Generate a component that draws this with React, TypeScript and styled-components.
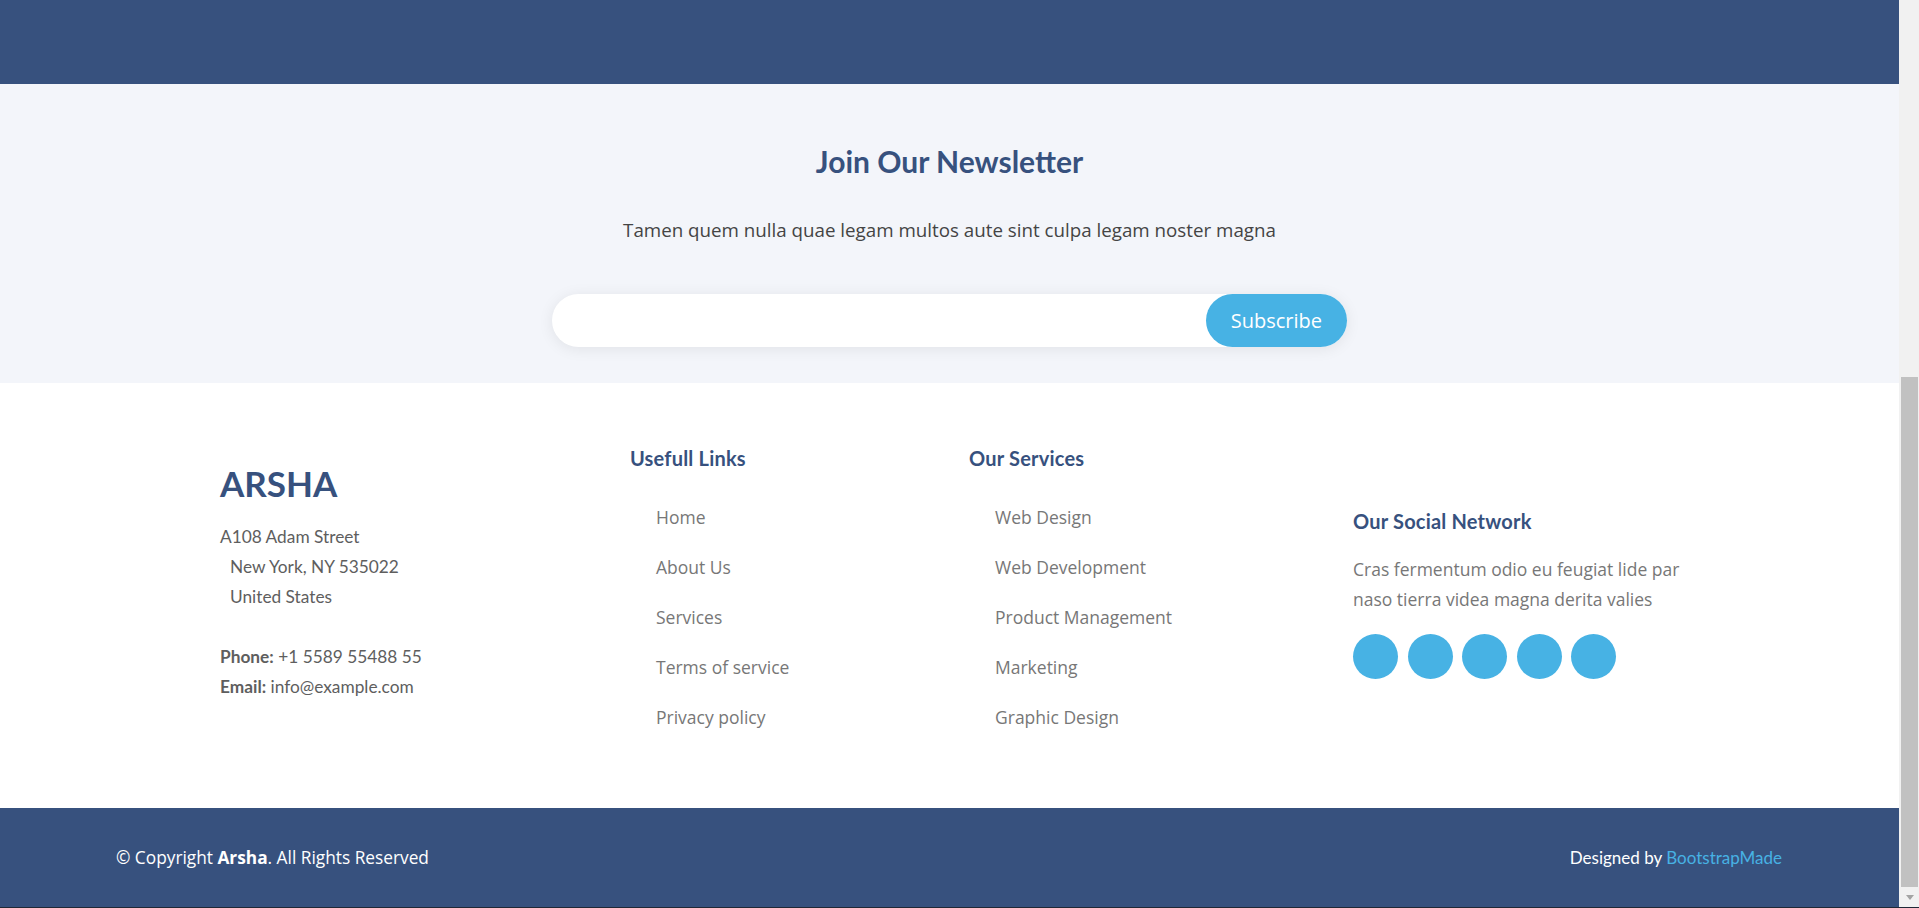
import styled, { createGlobalStyle } from "styled-components";

const usefulLinks = ['Home', 'About Us', 'Services', 'Terms of service', 'Privacy policy'];
const services = ['Web Design', 'Web Development', 'Product Management', 'Marketing', 'Graphic Design'];
const socials = ['twitter', 'facebook', 'instagram', 'skype', 'linkedin'];

const App = () => {
  return (
    <Screen>
      <GlobalStyle />
      <Viewport>
        <Page>
          <TopBand />
          <Newsletter>
            <NewsTitle>Join Our Newsletter</NewsTitle>
            <NewsText>Tamen quem nulla quae legam multos aute sint culpa legam noster magna</NewsText>
            <SubscribeForm onSubmit={(e) => e.preventDefault()}>
              <EmailInput type="email" name="email" />
              <SubscribeButton type="submit">Subscribe</SubscribeButton>
            </SubscribeForm>
          </Newsletter>

          <FooterTop>
            <Column $offset={18}>
              <Logo>Arsha</Logo>
              <Address>
                A108 Adam Street<br />
                <Indent>New York, NY 535022</Indent><br />
                <Indent>United States</Indent><br /><br />
                <strong>Phone:</strong> +1 5589 55488 55<br />
                <strong>Email:</strong> info@example.com
              </Address>
            </Column>

            <Column $offset={0}>
              <ColTitle>Usefull Links</ColTitle>
              <LinkList>
                {usefulLinks.map((l) => <LinkItem key={l}>{l}</LinkItem>)}
              </LinkList>
            </Column>

            <Column $offset={0}>
              <ColTitle>Our Services</ColTitle>
              <LinkList>
                {services.map((s) => <LinkItem key={s}>{s}</LinkItem>)}
              </LinkList>
            </Column>

            <Column $offset={63}>
              <ColTitle>Our Social Network</ColTitle>
              <SocialText>Cras fermentum odio eu feugiat lide par naso tierra videa magna derita valies</SocialText>
              <SocialRow>
                {socials.map((s) => <SocialCircle key={s} aria-label={s} />)}
              </SocialRow>
            </Column>
          </FooterTop>

          <FooterBottom>
            <Copyright>© Copyright <strong>Arsha</strong>. All Rights Reserved</Copyright>
            <Credits>Designed by <a href="#">BootstrapMade</a></Credits>
          </FooterBottom>
        </Page>

        <Scrollbar>
          <Thumb />
          <ArrowBox><Arrow /></ArrowBox>
        </Scrollbar>
      </Viewport>
      <BottomEdge />
    </Screen>
  );
}

export default App;

const GlobalStyle = createGlobalStyle`
  html, body {
    margin: 0;
    padding: 0;
    overflow: hidden;
  }
  body {
    font-family: "Open Sans", sans-serif;
  }
  * {
    box-sizing: border-box;
  }
`

const Screen = styled.div`
  width: 1919px;
  height: 908px;
  display: flex;
  flex-direction: column;
`
const Viewport = styled.div`
  flex: 1;
  min-height: 0;
  display: flex;
`
const Page = styled.div`
  flex: 1;
  display: flex;
  flex-direction: column;
  overflow: hidden;
`
const TopBand = styled.div`
  height: 84px;
  background: #37517e;
`

const Newsletter = styled.section`
  height: 299px;
  padding-top: 62px;
  background: #f3f5fa;
  display: flex;
  flex-direction: column;
  align-items: center;
`
const NewsTitle = styled.h4`
  margin: 0 0 40px;
  font-family: "Lato", sans-serif;
  font-size: 30px;
  font-weight: 700;
  line-height: 1;
  color: #37517e;
`
const NewsText = styled.p`
  margin: 0 0 50px;
  font-size: 18.75px;
  line-height: 28px;
  color: #444444;
`
const SubscribeForm = styled.form`
  width: 795px;
  height: 53px;
  display: flex;
  background: #fff;
  border-radius: 50px;
  box-shadow: 0px 2px 15px rgba(0, 0, 0, 0.08);
`
const EmailInput = styled.input`
  flex: 1;
  border: 0;
  background: transparent;
  padding: 0 24px;
  font: inherit;
  outline: none;
`
const SubscribeButton = styled.button`
  border: 0;
  border-radius: 50px;
  padding: 0 25px;
  background: #47b2e4;
  color: #fff;
  font-family: "Open Sans", sans-serif;
  font-size: 20px;
`

const FooterTop = styled.div`
  height: 425px;
  padding: 65px 0 0 220px;
  background: #fff;
  display: grid;
  grid-template-columns: 410px 339px 384px 350px;
  align-items: start;
`
const Column = styled.div<{ $offset: number }>`
  margin-top: ${(props) => props.$offset + 'px'};
`
const Logo = styled.h3`
  margin: 0 0 21px;
  font-family: "Lato", sans-serif;
  font-size: 35px;
  font-weight: 700;
  line-height: 1;
  text-transform: uppercase;
  color: #37517e;
`
const Address = styled.p`
  margin: 0;
  font-family: "Lato", sans-serif;
  font-size: 17.3px;
  line-height: 30px;
  color: #5e5e5e;
  strong {
    font-weight: 700;
  }
`
const Indent = styled.span`
  padding-left: 10px;
`
const ColTitle = styled.h4`
  margin: 0 0 24px;
  font-family: "Lato", sans-serif;
  font-size: 20px;
  font-weight: 700;
  line-height: 1;
  letter-spacing: 0.2px;
  color: #37517e;
`
const LinkList = styled.ul`
  list-style: none;
  margin: 0;
  padding: 0;
`
const LinkItem = styled.li`
  height: 50px;
  display: flex;
  align-items: center;
  padding-left: 26px;
  font-size: 17.5px;
  color: #777777;
`
const SocialText = styled.p`
  margin: 0 0 19.5px;
  font-size: 17.5px;
  line-height: 29.5px;
  color: #777777;
`
const SocialRow = styled.div`
  display: flex;
  gap: 9.5px;
`
const SocialCircle = styled.a`
  width: 45px;
  height: 45px;
  border-radius: 50%;
  background: #47b2e4;
`

const FooterBottom = styled.div`
  flex: 1;
  padding: 0 117px 0 116px;
  background: #37517e;
  color: #fff;
  display: flex;
  justify-content: space-between;
  align-items: center;
`
const Copyright = styled.div`
  font-size: 17.3px;
  strong {
    font-weight: 700;
  }
`
const Credits = styled.div`
  font-family: "Lato", sans-serif;
  font-size: 17px;
  a {
    color: #47b2e4;
    text-decoration: none;
  }
`

const Scrollbar = styled.aside`
  width: 20px;
  background: #f1f1f1;
  display: flex;
  flex-direction: column;
  justify-content: flex-end;
`
const Thumb = styled.div`
  height: 510px;
  margin: 0 1px 0 2px;
  background: #c1c1c1;
`
const ArrowBox = styled.div`
  height: 20px;
  display: flex;
  align-items: center;
  justify-content: center;
  padding-left: 1px;
`
const Arrow = styled.div`
  width: 0;
  height: 0;
  border-left: 4.5px solid transparent;
  border-right: 4.5px solid transparent;
  border-top: 5px solid #a3a3a3;
`
const BottomEdge = styled.div`
  height: 1px;
  background: #1f2836;
`
